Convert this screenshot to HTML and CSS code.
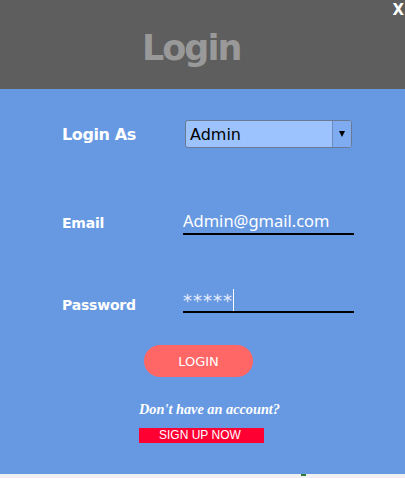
FILE: index.html
```html
<!DOCTYPE html>
<html>
<head>
<meta charset="utf-8">
<link rel="stylesheet" href="styles.css">
</head>
<body>
<div class="page">
  <header class="header">
    <h1 class="title">Login</h1>
    <span class="close">X</span>
  </header>
  <main class="main">
    <div class="row row-role">
      <span class="label label-lg">Login As</span>
      <div class="select">
        <span class="select-value">Admin</span>
        <span class="select-btn"><span class="arrow"></span></span>
      </div>
    </div>
    <div class="row row-email">
      <span class="label">Email</span>
      <div class="field"><span class="field-text">Admin@gmail.com</span></div>
    </div>
    <div class="row row-pass">
      <span class="label label-pass">Password</span>
      <div class="field"><span class="field-stars">*****</span><span class="caret"></span></div>
    </div>
    <div class="actions">
      <button class="login-btn">LOGIN</button>
      <p class="prompt">Don't have an account?</p>
      <span class="signup">SIGN UP NOW</span>
    </div>
  </main>
  <footer class="footer"><span class="mark"></span></footer>
</div>
</body>
</html>
```

FILE: styles.css
```css
html, body {
  margin: 0;
  padding: 0;
}
body {
  width: 405px;
  height: 478px;
  overflow: hidden;
  font-family: "DejaVu Sans", Verdana, sans-serif;
  background: #f0f0f0;
}
.page {
  display: flex;
  flex-direction: column;
  height: 478px;
}
.header {
  position: relative;
  height: 89px;
  background: #5e5e5e;
  display: flex;
  align-items: flex-start;
  padding-left: 142px;
  box-sizing: border-box;
}
.title {
  margin: 0;
  margin-top: 26px;
  font-size: 35px;
  line-height: 44px;
  font-weight: bold;
  color: #999999;
  letter-spacing: -2px;
}
.close {
  position: absolute;
  right: 1px;
  top: 2px;
  color: #ffffff;
  font-weight: bold;
  font-size: 15px;
  line-height: 16px;
}
.main {
  height: 385px;
  background: #6699e2;
  display: flex;
  flex-direction: column;
  padding-top: 31px;
  box-sizing: border-box;
}
.row {
  display: flex;
  align-items: center;
  padding-left: 62px;
}
.label {
  width: 121px;
  color: #ffffff;
  font-weight: bold;
  font-size: 14px;
  letter-spacing: -0.2px;
}
.label-lg {
  width: 123px;
  font-size: 16px;
  letter-spacing: -0.4px;
}
.row-role {
  height: 28px;
}
.select {
  width: 167px;
  height: 28px;
  box-sizing: border-box;
  border: 1px solid #6b7a94;
  border-radius: 3px;
  background: #9cc3fd;
  display: flex;
  align-items: center;
  overflow: hidden;
}
.select-value {
  flex: 1;
  padding-left: 4px;
  font-size: 16px;
  color: #000000;
}
.select-btn {
  width: 18px;
  height: 100%;
  background: #7fabf0;
  border-left: 1px solid #6f8dbb;
  display: flex;
  align-items: center;
  justify-content: center;
}
.arrow {
  width: 0;
  height: 0;
  border-left: 3.5px solid transparent;
  border-right: 3.5px solid transparent;
  border-top: 6px solid #000000;
}
.field {
  position: relative;
  width: 171px;
  height: 25px;
  box-sizing: border-box;
  border-bottom: 2px solid #000000;
  display: flex;
  align-items: flex-end;
}
.row-email {
  margin-top: 62px;
  height: 25px;
}
.field-text {
  color: #ffffff;
  font-family: "Noto Sans", "Open Sans", sans-serif;
  font-size: 16.5px;
  line-height: 20px;
  margin-bottom: 2px;
}
.row-pass {
  margin-top: 54px;
  height: 24px;
}
.row-pass .field {
  height: 24px;
  align-items: flex-start;
}
.label-pass {
  padding-top: 7px;
}
.field-stars {
  color: #e8eefc;
  font-size: 18px;
  line-height: 18px;
  margin-top: 3px;
  letter-spacing: 1px;
}
.caret {
  width: 1px;
  height: 22px;
  background: #ffffff;
}
.actions {
  display: flex;
  flex-direction: column;
  align-items: flex-start;
  padding-left: 139px;
}
.login-btn {
  margin-top: 32px;
  margin-left: 5px;
  width: 109px;
  height: 32px;
  border: none;
  border-radius: 16px;
  background: #ff6666;
  color: #ffffff;
  font-family: "DejaVu Sans", sans-serif;
  font-size: 13px;
  padding: 0;
}
.prompt {
  margin: 24px 0 0 0;
  font-family: "Liberation Serif", "Times New Roman", serif;
  font-style: italic;
  font-weight: bold;
  font-size: 14.3px;
  line-height: 16px;
  color: #ffffff;
}
.signup {
  margin-top: 11px;
  width: 125px;
  height: 15px;
  box-sizing: border-box;
  padding-left: 20px;
  background: #ff0033;
  color: #ffffff;
  font-family: "Liberation Sans", Arial, sans-serif;
  font-size: 12px;
  line-height: 15px;
}
.footer {
  flex: 1;
  background: #f0f0f0;
  position: relative;
}
.mark {
  position: absolute;
  left: 301px;
  top: 0;
  width: 5px;
  height: 2px;
  background: #2f7a3a;
}
```
